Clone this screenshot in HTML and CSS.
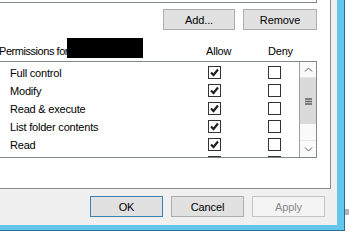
FILE: index.html
```html
<!DOCTYPE html>
<html>
<head>
  <meta charset="UTF-8">
  <title>Security</title>
  <link rel="stylesheet" href="styles.css">
</head>
<body>
  <div class="window">
    <div class="dialog">
      <div class="page">
        <div class="names"></div>

        <div class="name-actions">
          <button class="btn btn-add">Add...</button>
          <button class="btn btn-remove">Remove</button>
        </div>

        <div class="perm-head">
          <span class="perm-title">Permissions for</span>
          <span>Allow</span>
          <span>Deny</span>
          <span class="redact"></span>
        </div>

        <div class="perm-list">
          <div class="perm-rows">
            <div class="perm-row">
              <span class="perm-name">Full control</span>
              <span class="check"><svg viewBox="0 0 11 11"><path d="M2 5.5 L4.5 8 L9 2.5"/></svg></span>
              <span class="check"></span>
            </div>
            <div class="perm-row">
              <span class="perm-name">Modify</span>
              <span class="check"><svg viewBox="0 0 11 11"><path d="M2 5.5 L4.5 8 L9 2.5"/></svg></span>
              <span class="check"></span>
            </div>
            <div class="perm-row">
              <span class="perm-name">Read &amp; execute</span>
              <span class="check"><svg viewBox="0 0 11 11"><path d="M2 5.5 L4.5 8 L9 2.5"/></svg></span>
              <span class="check"></span>
            </div>
            <div class="perm-row">
              <span class="perm-name">List folder contents</span>
              <span class="check"><svg viewBox="0 0 11 11"><path d="M2 5.5 L4.5 8 L9 2.5"/></svg></span>
              <span class="check"></span>
            </div>
            <div class="perm-row">
              <span class="perm-name">Read</span>
              <span class="check"><svg viewBox="0 0 11 11"><path d="M2 5.5 L4.5 8 L9 2.5"/></svg></span>
              <span class="check"></span>
            </div>
            <div class="perm-row">
              <span class="perm-name"></span>
              <span class="check"></span>
              <span class="check"></span>
            </div>
          </div>

          <div class="scrollbar">
            <div class="sb-btn">
              <svg viewBox="0 0 9 5"><path d="M1 4.5 L4.5 1 L8 4.5"/></svg>
            </div>
            <div class="sb-thumb">
              <svg viewBox="0 0 7 7"><path d="M0 1 H7 M0 3.5 H7 M0 6 H7"/></svg>
            </div>
            <div class="sb-track"></div>
            <div class="sb-btn sb-down">
              <svg viewBox="0 0 9 5"><path d="M1 0.5 L4.5 4 L8 0.5"/></svg>
            </div>
          </div>
        </div>
      </div>

      <div class="dialog-actions">
        <button class="btn btn-default">OK</button>
        <button class="btn">Cancel</button>
        <button class="btn" disabled>Apply</button>
      </div>
    </div>
  </div>

  <div class="behind"></div>
</body>
</html>
```

FILE: styles.css
```css
html,
body {
  margin: 0;
  width: 349px;
  height: 241px;
  overflow: hidden;
  background-color: #fff;
  font-family: 'Liberation Sans', Arial, sans-serif;
  font-size: 11px;
  letter-spacing: -0.2px;
  color: #000;
}

body {
  position: relative;
}

.window {
  display: inline-block;
  margin-left: -12px;
  background-color: #63c6ec;
  padding: 0 7px 5px 0;
  border-right: 1px solid #2a6e93;
  border-bottom: 1px solid #2a6e93;
}

.dialog {
  background-color: #f0f0f0;
  padding-right: 6px;
}

.page {
  box-sizing: border-box;
  width: 343px;
  height: 189px;
  padding: 0 13px 0 11px;
  background-color: #fff;
  border-right: 1px solid #898c95;
  border-bottom: 1px solid #898c95;
}

.names {
  height: 2px;
  border-right: 1px solid #828790;
  border-bottom: 1px solid #828790;
}

.name-actions {
  display: flex;
  justify-content: flex-end;
  gap: 8px;
  margin-top: 6px;
}

.btn {
  box-sizing: border-box;
  width: 73px;
  height: 21px;
  padding: 0;
  background-color: #e1e1e1;
  border: 1px solid #adadad;
  border-radius: 0;
  font-family: inherit;
  font-size: 11px;
  letter-spacing: -0.1px;
  color: #000;
}

.btn-add {
  width: 72px;
}

.btn-remove {
  width: 74px;
}

.btn-default {
  border-color: #3c7fb1;
}

.btn:disabled {
  background-color: #f4f4f4;
  border-color: #c4c4c4;
  color: #8a8a8a;
}

.perm-head {
  position: relative;
  display: grid;
  grid-template-columns: 207px 62px 1fr;
  height: 20px;
  margin-top: 8px;
  padding-top: 6px;
  box-sizing: border-box;
  line-height: 14px;
}

.perm-title {
  letter-spacing: -0.45px;
}

.redact {
  position: absolute;
  left: 68px;
  top: 0;
  width: 76px;
  height: 20px;
  background-color: #000;
}

.perm-list {
  display: flex;
  box-sizing: border-box;
  height: 97px;
  margin-top: 3px;
  border: 1px solid #828790;
  overflow: hidden;
}

.perm-rows {
  flex: 1;
  padding-top: 2px;
}

.perm-row {
  display: grid;
  grid-template-columns: 208px 60px 1fr;
  align-items: start;
  height: 18px;
}

.perm-name {
  padding-left: 10px;
  line-height: 18px;
}

.check {
  box-sizing: border-box;
  display: block;
  width: 13px;
  height: 13px;
  margin-top: 2px;
  background-color: #fff;
  border: 1px solid #333;
}

.check svg {
  display: block;
  width: 11px;
  height: 11px;
}

.check path {
  fill: none;
  stroke: #222;
  stroke-width: 2.2;
}

.scrollbar {
  box-sizing: border-box;
  display: flex;
  flex-direction: column;
  width: 17px;
  border-left: 1px solid #a0a0a0;
  background-color: #fafafa;
}

.sb-btn {
  display: flex;
  justify-content: center;
  align-items: center;
  height: 16px;
  border-bottom: 1px solid #e6e6e6;
  box-sizing: border-box;
}

.sb-down {
  height: 17px;
  border-bottom: none;
  border-top: 1px solid #e6e6e6;
}

.sb-btn svg {
  width: 9px;
  height: 5px;
}

.sb-btn path,
.sb-thumb path {
  fill: none;
  stroke: #606060;
  stroke-width: 1;
}

.sb-thumb {
  display: flex;
  justify-content: center;
  align-items: center;
  height: 46px;
  background-color: #dadada;
}

.sb-thumb svg {
  width: 7px;
  height: 7px;
}

.sb-thumb path {
  stroke-width: 1.3;
}

.sb-track {
  height: 16px;
}

.dialog-actions {
  display: flex;
  justify-content: flex-end;
  gap: 8px;
  height: 36px;
  box-sizing: border-box;
  padding: 7px 6px 0 0;
}

.behind {
  position: absolute;
  left: 345px;
  top: 209px;
  width: 4px;
  height: 6px;
  background-color: #b4b4b4;
}
```
